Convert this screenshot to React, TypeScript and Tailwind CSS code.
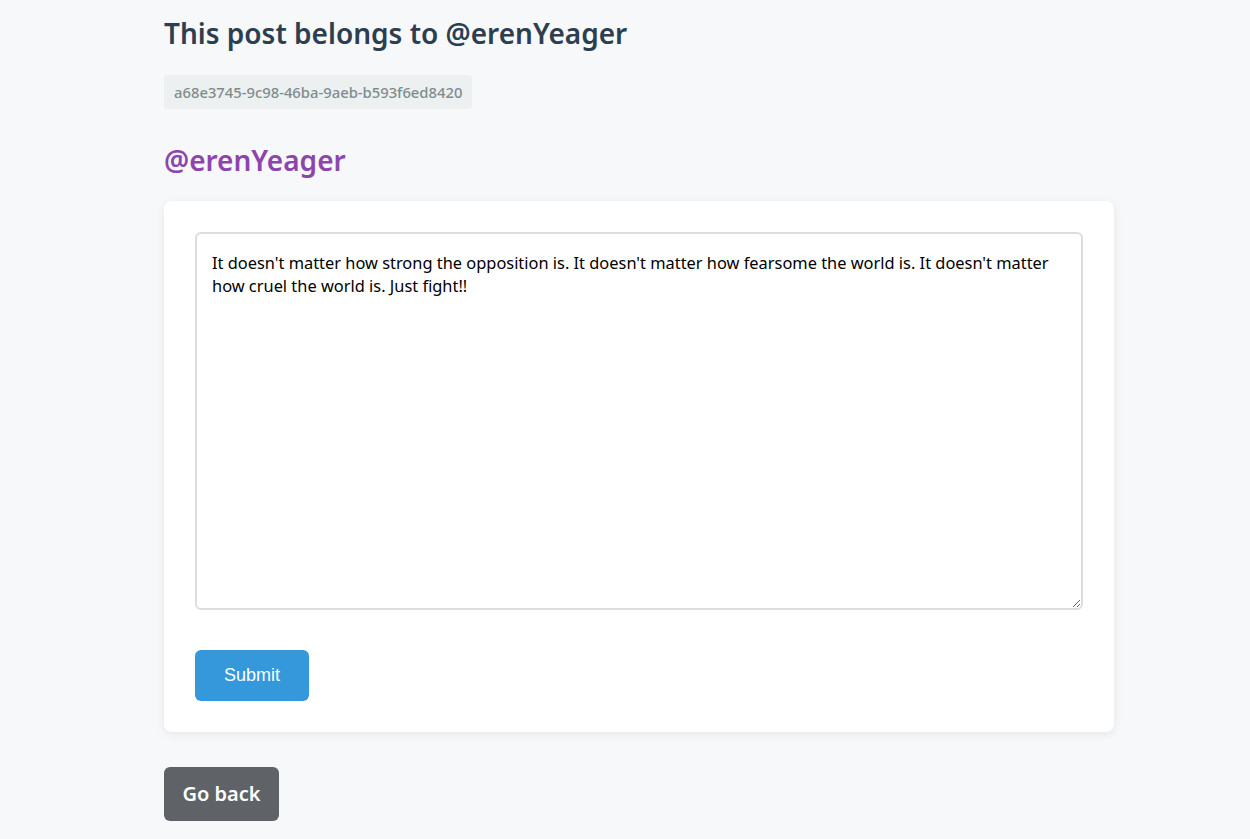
export default function App() {
  const font = { fontFamily: '"Noto Sans", "Open Sans", sans-serif' };
  return (
    <div className="min-h-[839px] bg-[#f7f8fa]" style={font}>
      <div className="w-[950px] ml-[164px] pt-[14px]">
        <h1 className="text-[28px] leading-[38px] font-semibold text-[#2c3e50]">This post belongs to @erenYeager</h1>
        <div className="mt-[23px] inline-block bg-[#ecf0f1] text-[#7f8c8d] text-[14.8px] leading-[20px] font-medium px-[10px] py-[7px] rounded-[4px]">
          a68e3745-9c98-46ba-9aeb-b593f6ed8420
        </div>
        <h2 className="mt-[32px] text-[28px] leading-[38px] font-semibold text-[#8e44ad]">@erenYeager</h2>
        <div className="mt-[22px] bg-white rounded-[8px] shadow-[0_2px_10px_rgba(0,0,0,0.08)] p-[31px]">
          <textarea
            className="block w-full h-[378px] border-2 border-[#dddddd] rounded-[6px] px-[15px] pt-[17px] pb-[15px] text-[16.4px] leading-[23px] text-black outline-none"
            style={font}
            defaultValue="It doesn't matter how strong the opposition is. It doesn't matter how fearsome the world is. It doesn't matter how cruel the world is. Just fight!!"
          />
          <button
            className="mt-[40px] w-[114px] h-[51px] bg-[#3498db] text-white text-[18px] rounded-[6px]"
            style={{ fontFamily: '"Liberation Sans", Arial, sans-serif' }}
          >
            Submit
          </button>
        </div>
        <button className="mt-[35px] w-[115px] h-[54px] bg-[#5f6368] text-white text-[20px] font-semibold rounded-[6px]" style={font}>
          Go back
        </button>
      </div>
    </div>
  );
}
